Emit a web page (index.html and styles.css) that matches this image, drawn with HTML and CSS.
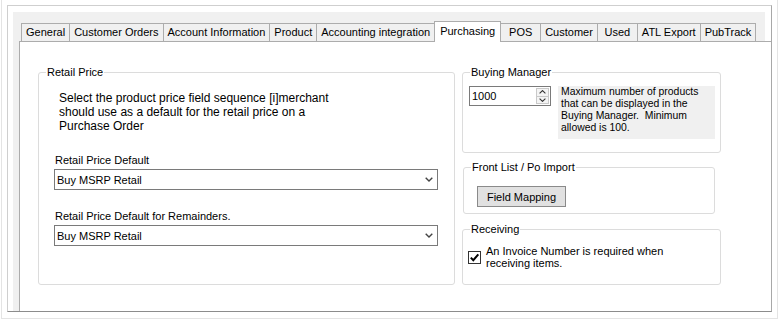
FILE: index.html
```html
<!DOCTYPE html>
<html lang="en">
  <head>
    <meta charset="UTF-8" />
    <title>Purchasing Settings</title>
    <link rel="stylesheet" href="styles.css">
  </head>
  <body>
    <div class="shot">
      <div class="frame">
        <div class="window">
          <div class="tabs">
            <span class="tab">General</span>
            <span class="tab">Customer Orders</span>
            <span class="tab">Account Information</span>
            <span class="tab">Product</span>
            <span class="tab">Accounting integration</span>
            <span class="tab active">Purchasing</span>
            <span class="tab">POS</span>
            <span class="tab">Customer</span>
            <span class="tab">Used</span>
            <span class="tab">ATL Export</span>
            <span class="tab">PubTrack</span>
          </div>
          <div class="panel">
            <fieldset class="group retail">
              <legend>Retail Price</legend>
              <p class="note">
                Select the product price field sequence [i]merchant<br>
                should use as a default for the retail price on a<br>
                Purchase Order
              </p>
              <div class="field-label">Retail Price Default</div>
              <div class="combo">
                <span>Buy MSRP Retail</span>
                <svg width="8" height="5" viewBox="0 0 8 5"><path d="M0.7 0.7 L4 4 L7.3 0.7" fill="none" stroke="#444" stroke-width="1.4"/></svg>
              </div>
              <div class="field-label second">Retail Price Default for Remainders.</div>
              <div class="combo">
                <span>Buy MSRP Retail</span>
                <svg width="8" height="5" viewBox="0 0 8 5"><path d="M0.7 0.7 L4 4 L7.3 0.7" fill="none" stroke="#444" stroke-width="1.4"/></svg>
              </div>
            </fieldset>

            <div class="side">
              <fieldset class="group buying">
                <legend>Buying Manager</legend>
                <div class="buying-row">
                  <div class="spin">
                    <span class="spin-value">1000</span>
                    <div class="spin-buttons">
                      <span class="spin-btn">
                        <svg width="7" height="4" viewBox="0 0 7 4"><path d="M0.6 3.4 L3.5 0.6 L6.4 3.4" fill="none" stroke="#333" stroke-width="1.1"/></svg>
                      </span>
                      <span class="spin-btn">
                        <svg width="7" height="4" viewBox="0 0 7 4"><path d="M0.6 0.6 L3.5 3.4 L6.4 0.6" fill="none" stroke="#333" stroke-width="1.1"/></svg>
                      </span>
                    </div>
                  </div>
                  <div class="hint">
                    Maximum number of products<br>
                    that can be displayed in the<br>
                    Buying Manager.&nbsp; Minimum<br>
                    allowed is 100.
                  </div>
                </div>
              </fieldset>

              <fieldset class="group import">
                <legend>Front List / Po Import</legend>
                <button class="btn" type="button">Field Mapping</button>
              </fieldset>

              <fieldset class="group receiving">
                <legend>Receiving</legend>
                <div class="check-row">
                  <span class="check">
                    <svg width="11" height="11" viewBox="0 0 11 11"><path d="M1.8 5.6 L4.3 8.2 L9.3 2.4" fill="none" stroke="#000" stroke-width="2"/></svg>
                  </span>
                  <span class="check-text">An Invoice Number is required when<br>receiving items.</span>
                </div>
              </fieldset>
            </div>
          </div>
        </div>
      </div>
    </div>
  </body>
</html>
```

FILE: styles.css
```css
body {
  margin: 0;
  background: #fff;
  font-family: "Liberation Sans", Arial, sans-serif;
  color: #000;
}
.shot {
  margin-left: 1px;
  width: 777px;
  height: 319px;
  box-sizing: border-box;
  border: 1px solid #e4e4e4;
  border-top: 0;
  padding: 5px 0 0 5px;
}
.frame {
  width: 765px;
  height: 307px;
  box-sizing: border-box;
  border: 1px solid #cfcfcf;
  border-right-color: #a8a8a8;
  border-bottom-color: #8c8c8c;
  background: #fff;
  overflow: hidden;
}
.window {
  margin: 6px 6px 0 5px;
  background: #f0f0f0;
  height: 299px;
}

/* tab strip */
.tabs {
  display: flex;
  align-items: flex-end;
  height: 29px;
  padding-left: 8px;
  box-sizing: border-box;
}
.tab {
  height: 18px;
  min-width: 41px;
  box-sizing: border-box;
  padding: 0 4px;
  border: 1px solid #acacac;
  border-bottom: 0;
  font-size: 11px;
  line-height: 17px;
  text-align: center;
  white-space: nowrap;
}
.tab + .tab {
  margin-left: -1px;
}
.tab.active {
  position: relative;
  z-index: 1;
  height: 21px;
  margin-bottom: -1px;
  padding: 0 5px;
  background: #fff;
  line-height: 18px;
}

.panel {
  display: flex;
  gap: 7px;
  height: 270px;
  box-sizing: border-box;
  margin: 0 -6px 0 6px;
  padding: 23px 0 0 18px;
  background: #fff;
  border-left: 1px solid #acacac;
  border-top: 1px solid #acacac;
}

/* group boxes */
.group {
  margin: 0;
  padding: 0;
  min-width: 0;
  box-sizing: border-box;
  border: 1px solid #dcdcdc;
  border-radius: 3px;
}
.group legend {
  margin-left: 7px;
  padding: 0 1px;
  font-size: 11px;
  line-height: 14px;
}
.retail {
  width: 417px;
  height: 220px;
}
.note {
  margin: 12px 0 0 20px;
  font-size: 12px;
  line-height: 14px;
}
.field-label {
  margin: 20px 0 0 16px;
  font-size: 11px;
  line-height: 14px;
}
.field-label.second {
  margin-top: 19px;
}
.combo {
  display: flex;
  align-items: center;
  justify-content: space-between;
  width: 384px;
  height: 21px;
  box-sizing: border-box;
  margin: 2px 0 0 15px;
  padding: 0 4px 0 2px;
  border: 1px solid #7a7a7a;
  font-size: 11px;
}

.side {
  display: flex;
  flex-direction: column;
  width: 259px;
}
.buying {
  height: 88px;
}
.buying-row {
  display: flex;
  align-items: flex-start;
  margin: 7px 0 0 6px;
}
.spin {
  display: flex;
  width: 82px;
  height: 20px;
  box-sizing: border-box;
  border: 1px solid #7a7a7a;
}
.spin-value {
  flex: 1;
  padding-left: 2px;
  font-size: 11px;
  line-height: 18px;
}
.spin-buttons {
  display: flex;
  flex-direction: column;
  width: 13px;
  padding: 1px 1px 1px 0;
}
.spin-btn {
  flex: 1;
  display: flex;
  align-items: center;
  justify-content: center;
  border: 1px solid #c9c9c9;
  background: #f4f4f4;
}
.spin-btn + .spin-btn {
  margin-top: -1px;
}
.hint {
  width: 157px;
  height: 53px;
  box-sizing: border-box;
  margin-left: 7px;
  padding: 0 0 0 3px;
  background: #f0f0f0;
  font-size: 10.4px;
  line-height: 12px;
}

.import {
  width: 252px;
  margin: 7px 0 0 1px;
  padding-bottom: 6px;
}
.btn {
  display: block;
  width: 89px;
  height: 21px;
  margin: 12px 0 0 13px;
  padding: 0;
  background: #e1e1e1;
  border: 1px solid #8a8a8a;
  font-family: inherit;
  font-size: 11px;
  color: #000;
}

.receiving {
  height: 63px;
  margin-top: 8px;
}
.check-row {
  display: flex;
  align-items: center;
  margin: 9px 0 0 5px;
}
.check {
  display: flex;
  align-items: center;
  justify-content: center;
  width: 13px;
  height: 13px;
  box-sizing: border-box;
  border: 1px solid #333;
  background: #fff;
}
.check-text {
  margin-left: 5px;
  font-size: 11px;
  line-height: 12px;
}
```
